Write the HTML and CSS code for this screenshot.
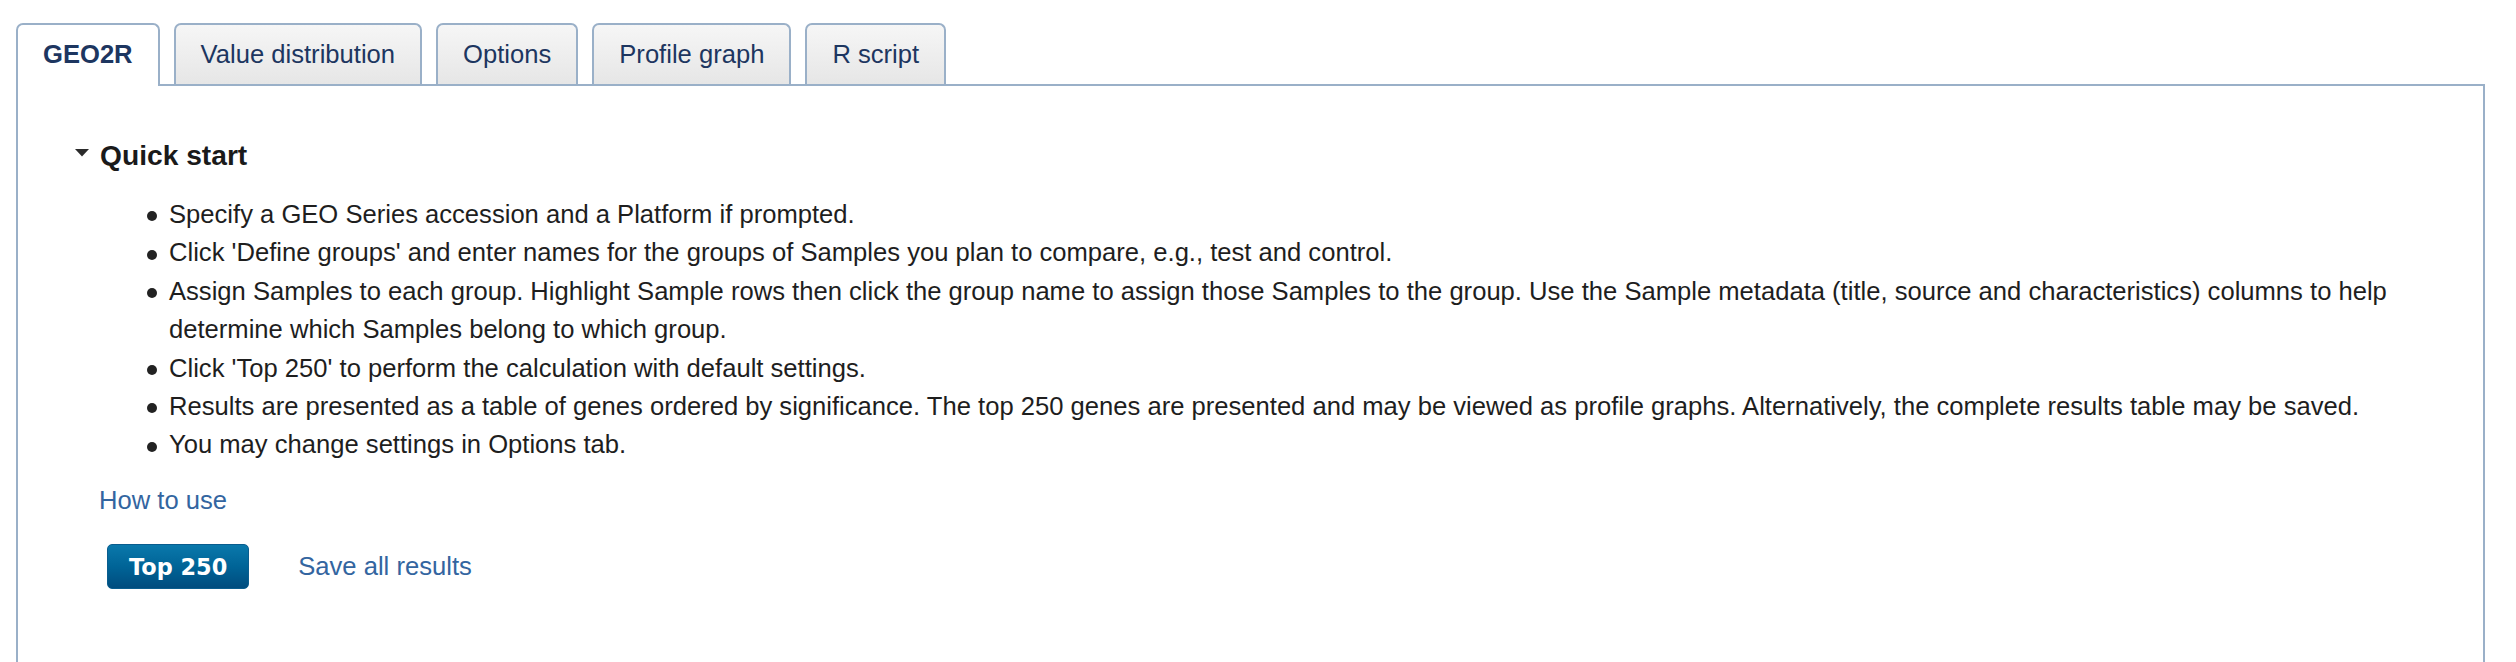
FILE: index.html
```html
<!DOCTYPE html>
<html lang="en">
<head>
<meta charset="utf-8">
<title>GEO2R</title>
<link rel="stylesheet" href="styles.css">
</head>
<body>
<div class="page">
  <div class="tabs">
    <div class="tab active">GEO2R</div>
    <div class="tab">Value distribution</div>
    <div class="tab">Options</div>
    <div class="tab">Profile graph</div>
    <div class="tab">R script</div>
  </div>
  <div class="panel">
    <h2 class="section-title">
      <svg class="caret" width="14" height="8" viewBox="0 0 14 8"><path d="M0 0 L14 0 L7 7.5 Z" fill="#2b2b2b"/></svg>
      <span>Quick start</span>
    </h2>
    <ul class="steps">
      <li>Specify a GEO Series accession and a Platform if prompted.</li>
      <li>Click 'Define groups' and enter names for the groups of Samples you plan to compare, e.g., test and control.</li>
      <li>Assign Samples to each group. Highlight Sample rows then click the group name to assign those Samples to the group. Use the Sample metadata (title, source and characteristics) columns to help determine which Samples belong to which group.</li>
      <li>Click 'Top 250' to perform the calculation with default settings.</li>
      <li>Results are presented as a table of genes ordered by significance. The top 250 genes are presented and may be viewed as profile graphs. Alternatively, the complete results table may be saved.</li>
      <li>You may change settings in Options tab.</li>
    </ul>
    <div class="howto"><a href="#" class="link">How to use</a></div>
    <div class="actions">
      <button class="btn-primary" type="button">Top 250</button>
      <a href="#" class="link save">Save all results</a>
    </div>
  </div>
</div>
</body>
</html>
```

FILE: styles.css
```css
html, body {
  margin: 0;
  padding: 0;
  background: #ffffff;
}

body {
  font-family: "Liberation Sans", Arial, Helvetica, sans-serif;
  font-size: 25.6px;
  color: #1e1e1e;
}

.page {
  padding: 23px 31px 0 16px;
}

.tabs {
  display: flex;
  align-items: flex-end;
  gap: 14px;
}

.tab {
  border: 2px solid #9ab0c8;
  border-bottom: none;
  border-radius: 7px 7px 0 0;
  padding: 0 25px;
  line-height: 59px;
  color: #1d3660;
  background: linear-gradient(to bottom, #f6f6f6 0%, #eeeeee 50%, #e6e6e6 100%);
  white-space: nowrap;
}

.tab.active {
  position: relative;
  z-index: 1;
  background: #ffffff;
  font-weight: bold;
  padding-bottom: 2px;
  margin-bottom: -2px;
}

.panel {
  border: 2px solid #9ab0c8;
  border-bottom: none;
  min-height: 620px;
  padding: 50px 20px 0 57px;
}

.section-title {
  display: flex;
  align-items: center;
  margin: 0;
  font-size: 28.2px;
  font-weight: bold;
  line-height: 38px;
  color: #1a1a1a;
}

.caret {
  margin-right: 11px;
  margin-bottom: 5px;
  flex: none;
}

.steps {
  list-style: none;
  margin: 21px 0 0 0;
  padding: 0 0 0 94px;
  line-height: 38.4px;
}

.steps li::before {
  content: "";
  display: inline-block;
  width: 10px;
  height: 10px;
  border-radius: 50%;
  background: #222222;
  margin-left: -22px;
  margin-right: 12px;
  vertical-align: middle;
}

.howto {
  margin: 17px 0 0 24px;
  line-height: 38.4px;
}

.link {
  color: #3365a0;
  text-decoration: none;
}

.actions {
  display: flex;
  align-items: center;
  margin: 25px 0 0 32px;
}

.btn-primary {
  display: inline-flex;
  align-items: center;
  justify-content: center;
  height: 45px;
  padding: 0 21px;
  border: 1px solid #0a5d8e;
  border-radius: 5px;
  background: linear-gradient(to bottom, #0a78ab 0%, #006497 50%, #004c7e 100%);
  color: #ffffff;
  font-family: "DejaVu Sans", Verdana, sans-serif;
  font-weight: bold;
  font-size: 22.4px;
  line-height: 1;
}

.save {
  margin-left: 49px;
}
```
